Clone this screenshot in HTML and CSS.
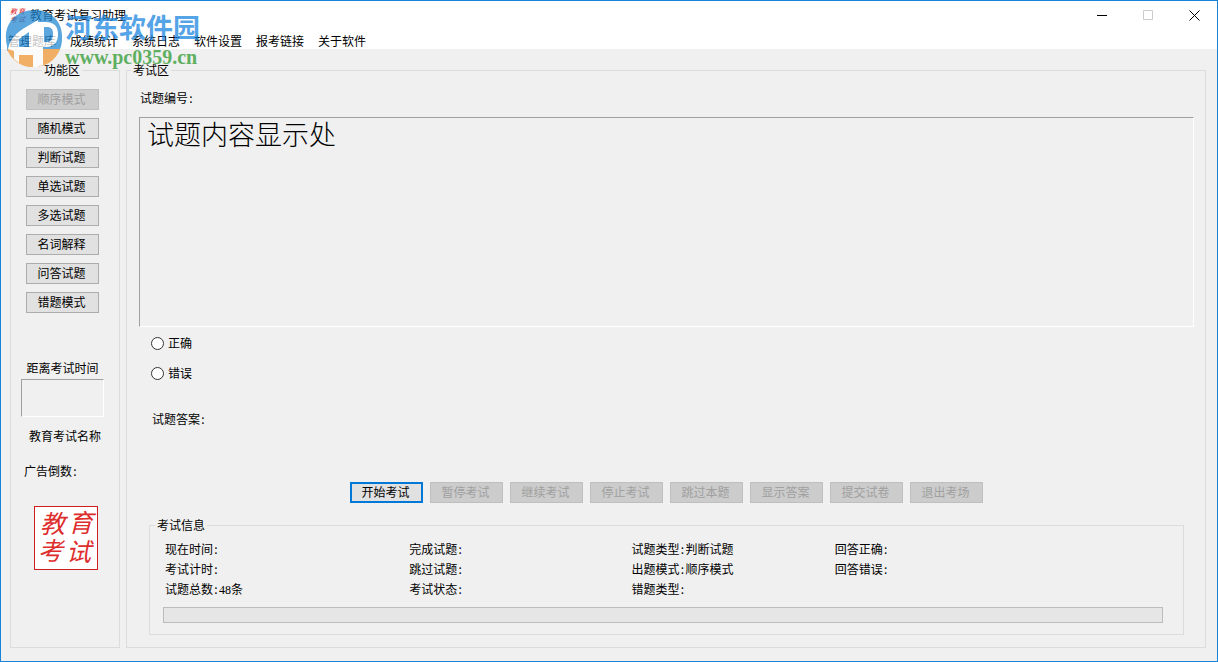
FILE: index.html
```html
<!DOCTYPE html>
<html lang="zh-CN">
<head>
<meta charset="utf-8">
<title>教育考试复习助理</title>
<link rel="stylesheet" href="styles.css">
</head>
<body>
<div class="window">
  <header class="titlebar">
    <svg class="app-icon" viewBox="0 0 16 16" aria-hidden="true">
      <g class="app-icon-text">
        <text x="1" y="7">教</text><text x="9" y="7">育</text>
        <text x="1" y="15">考</text><text x="9" y="15">试</text>
      </g>
    </svg>
    <h1 class="title">教育考试复习助理</h1>
    <div class="window-controls">
      <button class="window-button" type="button" aria-label="最小化"><svg viewBox="0 0 11 11"><path d="M0 5.500h10"/></svg></button>
      <button class="window-button" type="button" aria-label="最大化" disabled><svg viewBox="0 0 11 11"><path d="M.5 .5h9v9h-9z"/></svg></button>
      <button class="window-button" type="button" aria-label="关闭"><svg viewBox="0 0 11 11"><path d="M.5 .5l10 10M10.500 .5l-10 10"/></svg></button>
    </div>
  </header>
  <nav class="menu">
    <a href="#">管理题库</a><a href="#">成绩统计</a><a href="#">系统日志</a><a href="#">软件设置</a><a href="#">报考链接</a><a href="#">关于软件</a>
  </nav>

  <main class="workspace">
    <fieldset class="group functions">
      <legend>功能区</legend>
      <div class="mode-list">
        <button class="push" type="button" disabled>顺序模式</button>
        <button class="push" type="button">随机模式</button>
        <button class="push" type="button">判断试题</button>
        <button class="push" type="button">单选试题</button>
        <button class="push" type="button">多选试题</button>
        <button class="push" type="button">名词解释</button>
        <button class="push" type="button">问答试题</button>
        <button class="push" type="button">错题模式</button>
      </div>
      <p class="countdown-label">距离考试时间</p>
      <div class="sunken countdown"></div>
      <p class="exam-name">教育考试名称</p>
      <p class="ad-label">广告倒数<span class="colon">:</span></p>
      <svg class="seal" viewBox="0 0 64 64" role="img" aria-label="教育考试">
        <rect class="seal-frame" x=".5" y=".5" width="63" height="63"/>
        <g class="seal-text">
          <text x="6" y="27">教</text><text x="34" y="26">育</text>
          <text x="4" y="54">考</text><text x="32" y="55">试</text>
        </g>
      </svg>
    </fieldset>

    <fieldset class="group exam">
      <legend>考试区</legend>
      <p class="question-number">试题编号<span class="colon">:</span></p>
      <div class="sunken question">试题内容显示处</div>
      <div class="choices">
        <label><input type="radio" name="answer">正确</label>
        <label><input type="radio" name="answer">错误</label>
      </div>
      <p class="answer">试题答案<span class="colon">:</span></p>
      <div class="actions">
        <button class="push primary" type="button">开始考试</button>
        <button class="push" type="button" disabled>暂停考试</button>
        <button class="push" type="button" disabled>继续考试</button>
        <button class="push" type="button" disabled>停止考试</button>
        <button class="push" type="button" disabled>跳过本题</button>
        <button class="push" type="button" disabled>显示答案</button>
        <button class="push" type="button" disabled>提交试卷</button>
        <button class="push" type="button" disabled>退出考场</button>
      </div>
      <fieldset class="group info">
        <legend>考试信息</legend>
        <div class="facts">
          <span>现在时间<span class="colon">:</span></span>
          <span>完成试题<span class="colon">:</span></span>
          <span>试题类型<span class="colon">:</span>判断试题</span>
          <span>回答正确<span class="colon">:</span></span>
          <span>考试计时<span class="colon">:</span></span>
          <span>跳过试题<span class="colon">:</span></span>
          <span>出题模式<span class="colon">:</span>顺序模式</span>
          <span>回答错误<span class="colon">:</span></span>
          <span>试题总数<span class="colon">:</span><span class="digits">48</span>条</span>
          <span>考试状态<span class="colon">:</span></span>
          <span>错题类型<span class="colon">:</span></span>
        </div>
        <progress class="progress" value="0" max="48" aria-label="考试进度"></progress>
      </fieldset>
    </fieldset>
  </main>

  <div class="watermark">
    <svg class="watermark-logo" viewBox="0 0 58 58" aria-hidden="true">
      <path fill="#2389d2" d="M2 37C-3 17 9 1 30 1c16 0 28 12 27 28 0 6-1 9-3 13H2z"/>
      <path fill="#f29a37" d="M2 40h53c-4 11-14 18-26 18C16 58 6 51 2 40z"/>
      <path fill="#fff" d="M3 40c2-10 9-17 18-22l12-7v47h-5V46H14v8l-5-4v-8z"/>
      <path fill="#2389d2" d="M14 30l10-7v15H14z"/>
      <path fill="#f29a37" d="M14 46h14v12c-5 0-10-1-14-4z"/>
      <path fill="#fff" d="M32 13h8c9 0 13 4 13 12s-4 13-12 13h-3v18l-6 2z"/>
      <path fill="#2389d2" d="M39 18h3c4 0 6 2 6 7s-2 8-6 8h-3z"/>
    </svg>
    <div class="watermark-words">
      <span class="watermark-name">河东软件园</span>
      <span class="watermark-site">www.pc0359.cn</span>
    </div>
  </div>
</div>
</body>
</html>
```
FILE: styles.css
```css
* { box-sizing: border-box; }

body {
  margin: 0;
  color: #000;
  font: 12px/16px "Noto Sans CJK SC", sans-serif;
}

p, h1 { margin: 0; font-size: 12px; font-weight: 400; }

.window {
  position: relative;
  display: flex;
  flex-direction: column;
  min-height: 100vh;
  background: #f0f0f0;
  border: 1px solid #1883d7;
}

.titlebar {
  display: flex;
  align-items: center;
  height: 28px;
  padding-left: 8px;
  background: #fff;
}

.app-icon { width: 16px; height: 16px; overflow: visible; }
.app-icon-text { fill: #e0242b; font-size: 7px; font-style: italic; }
.title { flex: 1; padding-left: 5px; }
.window-controls { display: flex; }

.window-button {
  display: grid;
  place-items: center;
  width: 46px;
  height: 28px;
  padding: 0;
  background: none;
  border: 0;
}

.window-button svg { width: 11px; height: 11px; fill: none; stroke: #000; }
.window-button:disabled svg { stroke: #ccc; }

.menu {
  display: flex;
  gap: 14px;
  height: 20px;
  padding: 4px 0 0 7px;
  background: #fff;
}

.menu a { color: #000; text-decoration: none; }

.workspace {
  display: flex;
  flex: 1;
  gap: 6px;
  padding: 13px 11px 13px 9px;
}

.group {
  display: flex;
  flex-direction: column;
  min-width: 0;
  margin: 0;
  border: 1px solid #dcdcdc;
}

.group legend { padding: 0 2px; }
.functions { width: 110px; padding: 11px 15px 11px 10px; }
.functions legend { margin-left: 21px; }

.mode-list {
  display: flex;
  flex-direction: column;
  align-items: center;
  gap: 8px;
}

.push {
  width: 73px;
  height: 21px;
  padding: 0 2px 2px 0;
  font: inherit;
  line-height: 16px;
  color: #000;
  background: #e1e1e1;
  border: 1px solid #adadad;
}

.push:disabled { color: #a0a0a0; background: #ccc; border-color: #bfbfbf; }
.primary { border: 2px solid #0078d7; }

.sunken {
  border: 1px solid;
  border-color: #a0a0a0 #fff #fff #a0a0a0;
}

.countdown-label { margin-top: 47px; text-align: center; }
.countdown { height: 38px; margin-top: 3px; }
.exam-name { margin-top: 11px; padding-left: 8px; white-space: nowrap; }
.ad-label { margin-top: 19px; padding-left: 3px; }

.seal {
  width: 64px;
  height: 64px;
  margin: 27px 0 0 13px;
  overflow: visible;
}

.seal-frame { fill: #fff; stroke: #d01c1c; }
.seal-text { fill: #de2d2d; font-size: 25px; font-style: italic; }

.exam { flex: 1; padding: 12px 11px 12px 12px; }
.exam > legend { margin-left: -8px; }
.question-number { padding-left: 1px; }

.question {
  flex: 1;
  min-height: 208px;
  margin-top: 11px;
  padding: 0 7px;
  font-size: 27px;
  font-weight: 300;
  line-height: 32px;
}

.choices {
  display: flex;
  flex-direction: column;
  align-items: flex-start;
  gap: 14px;
  margin-top: 8px;
  padding-left: 12px;
}

.choices label { display: flex; align-items: center; gap: 4px; }

.choices input {
  appearance: none;
  width: 13px;
  height: 13px;
  margin: 0;
  background: #fff;
  border: 1px solid #333;
  border-radius: 50%;
}

.choices input:checked { box-shadow: inset 0 0 0 3px #fff; background: #333; }
.answer { margin-top: 30px; padding-left: 13px; }

.actions {
  display: flex;
  justify-content: center;
  gap: 7px;
  margin-top: 55px;
}

.info { margin: 14px 10px 0; padding: 8px 20px 11px 13px; }
.info legend { margin-left: -8px; }

.facts {
  display: grid;
  grid-template-columns: 244fr 222fr 203fr 328fr;
  row-gap: 4px;
  padding-left: 2px;
}

.colon { display: inline-block; width: 6px; text-align: center; }
.digits { font-family: "Liberation Serif", serif; }

.progress {
  appearance: none;
  width: 100%;
  height: 16px;
  margin-top: 9px;
  background: #e6e6e6;
  border: 1px solid #bcbcbc;
}

.progress::-webkit-progress-bar { background: #e6e6e6; }
.progress::-webkit-progress-value { background: #06b025; }

.watermark {
  position: absolute;
  top: 8px;
  left: 4px;
  display: flex;
  gap: 2px;
  pointer-events: none;
}

.watermark-logo { width: 58px; height: 58px; opacity: 0.75; }
.watermark-words { display: flex; flex-direction: column; opacity: 0.75; }

.watermark-name {
  color: #1c86e0;
  font-size: 27px;
  font-weight: 700;
  line-height: 36px;
}

.watermark-site {
  color: #2f9a30;
  font: 700 20px/24px "Liberation Serif", serif;
}
```
